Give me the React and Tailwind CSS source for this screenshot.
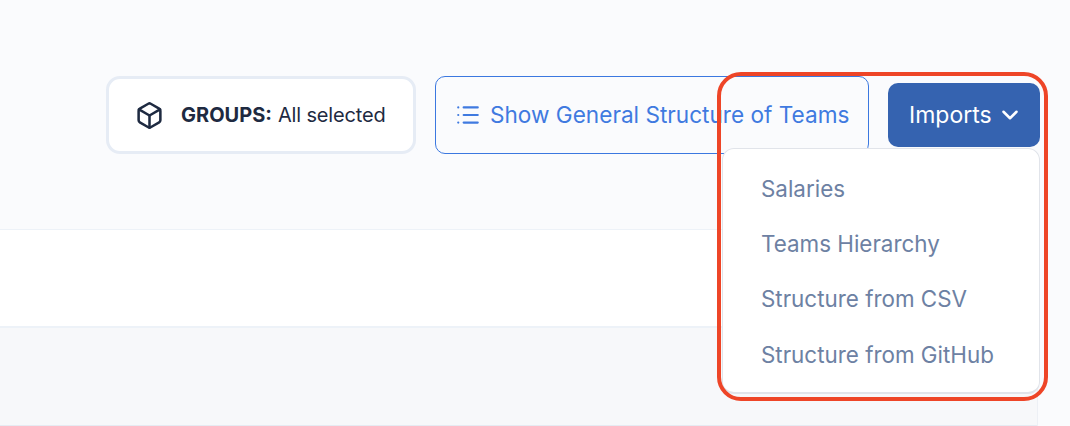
import React from 'react';
import { Box, List, ChevronDown } from 'lucide-react';

const importItems = ['Salaries', 'Teams Hierarchy', 'Structure from CSV', 'Structure from GitHub'];

const App = () => {
  return (
    <div className="relative w-[1070px] h-[426px] overflow-hidden bg-[#fafbfd] font-['Inter',sans-serif]">
      {/* Toolbar */}
      <div className="h-[229px] pt-[76px] pr-[30px] flex items-start justify-end">
        <button className="w-[310px] h-[78px] flex items-center pl-[26px] mr-[19px] bg-white border-[3px] border-[#e6ecf5] rounded-[14px] text-[20px] text-[#1e2a41]">
          <Box className="w-[29px] h-[29px] mr-[17px]" strokeWidth={2.1} />
          <span className="font-bold mr-[6px]">GROUPS:</span>
          <span className="tracking-[-0.15px]">All selected</span>
        </button>
        <button className="w-[434px] h-[78px] flex items-center pl-[19px] mr-[19px] border border-[#3b78e0] rounded-[10px] text-[22.6px] text-[#3f7ae0]">
          <List className="w-[26px] h-[26px] mr-[9px]" strokeWidth={2} />
          <span>Show General Structure of Teams</span>
        </button>
        <button className="w-[152px] h-[64px] mt-[7px] flex items-center pl-[21px] bg-[#3563b0] rounded-[10px] text-[23px] text-white">
          <span>Imports</span>
          <ChevronDown className="w-[26px] h-[26px] ml-[5px]" strokeWidth={2.3} />
        </button>
      </div>

      {/* Table */}
      <div className="w-[1038px] border-r border-[#edf0f5]">
        <div className="h-[99px] bg-white border-t border-b-2 border-[#edf2f8]" />
        <div className="h-[98px] bg-[#f7f8fa] border-b border-[#e6ebf2]" />
      </div>

      {/* Dropdown */}
      <div className="absolute left-[722px] top-[148px] w-[318px] h-[246px] py-[12px] bg-white border border-[#e1e4ea] border-b-2 rounded-[12px]">
        {importItems.map((item) => (
          <div key={item} className="h-[55.3px] flex items-center pl-[38px] text-[22.4px] text-[#6d81a3]">
            {item}
          </div>
        ))}
      </div>

      {/* Annotation */}
      <div className="absolute left-[717px] top-[72px] w-[331px] h-[329px] border-[4px] border-[#ee4527] rounded-[24px]" />
    </div>
  );
};

export default App;
